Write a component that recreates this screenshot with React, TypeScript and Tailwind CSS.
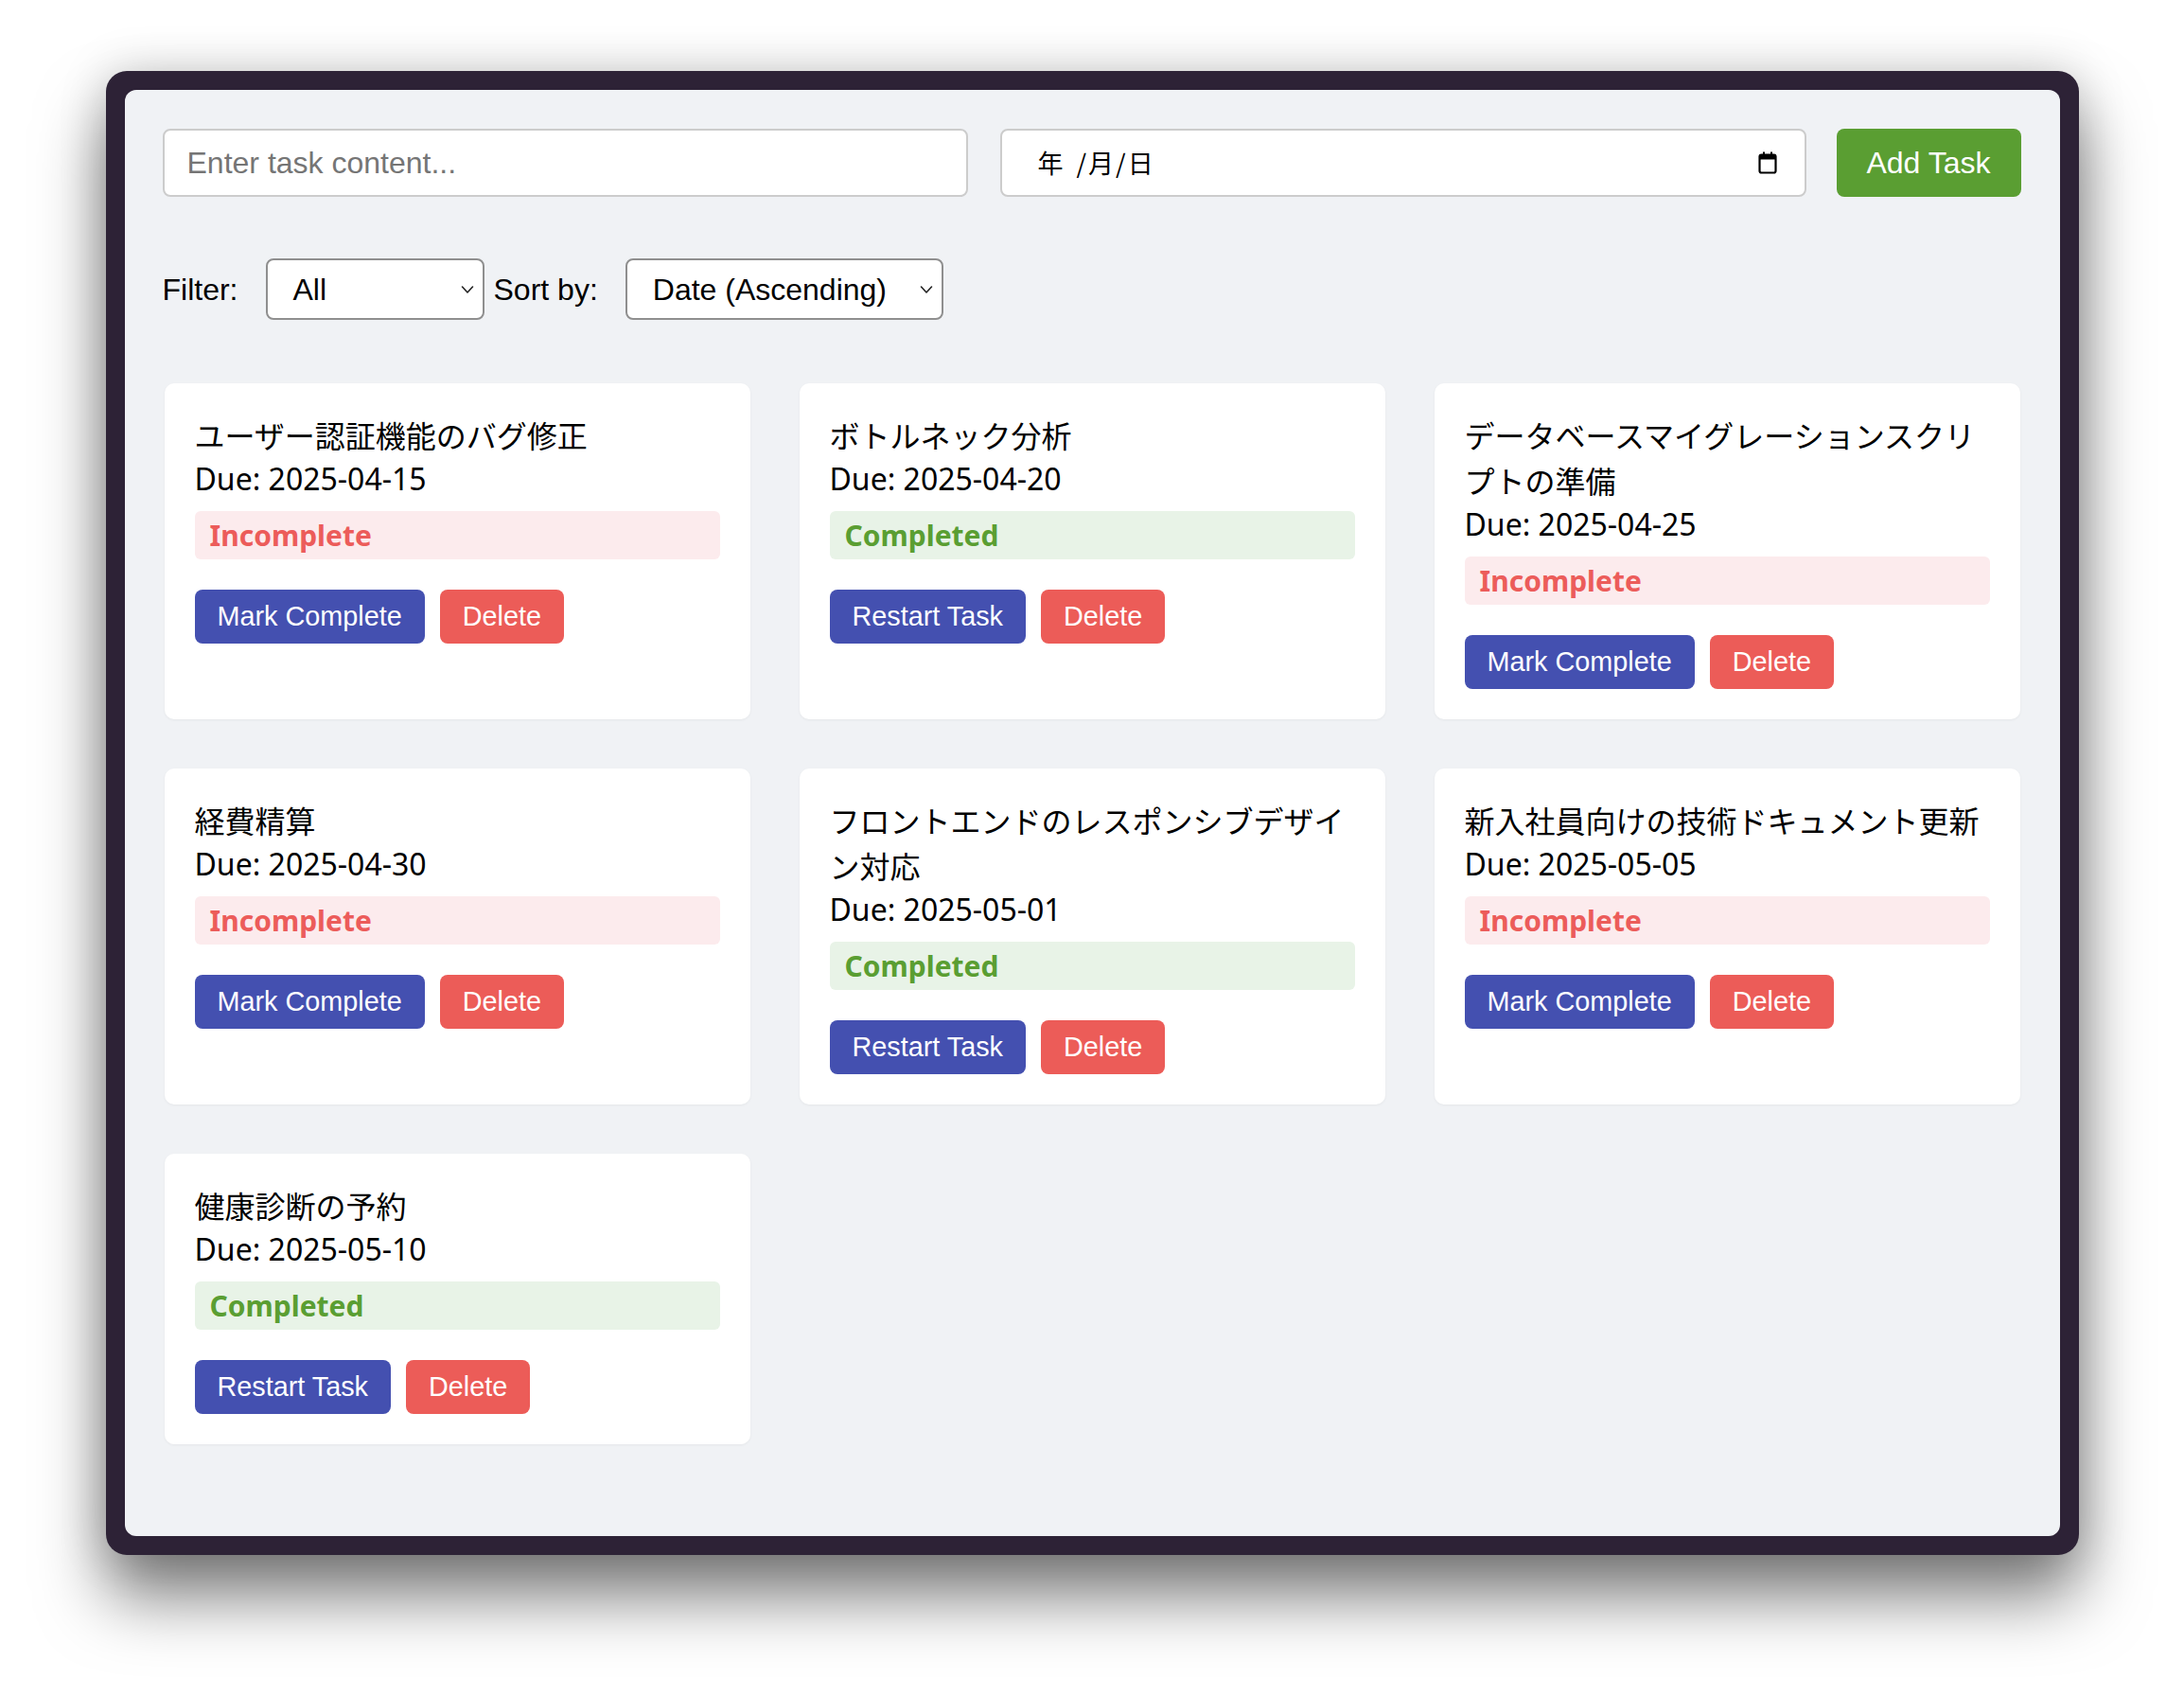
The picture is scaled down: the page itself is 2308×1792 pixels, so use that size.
import { useState } from 'react';

type Task = { id: number; text: string; due: string; done: boolean };

const initialTasks: Task[] = [
  { id: 1, text: 'ユーザー認証機能のバグ修正', due: '2025-04-15', done: false },
  { id: 2, text: 'ボトルネック分析', due: '2025-04-20', done: true },
  { id: 3, text: 'データベースマイグレーションスクリプトの準備', due: '2025-04-25', done: false },
  { id: 4, text: '経費精算', due: '2025-04-30', done: false },
  { id: 5, text: 'フロントエンドのレスポンシブデザイン対応', due: '2025-05-01', done: true },
  { id: 6, text: '新入社員向けの技術ドキュメント更新', due: '2025-05-05', done: false },
  { id: 7, text: '健康診断の予約', due: '2025-05-10', done: true },
];

const Chevron = () => (
  <svg width="14" height="10" viewBox="0 0 14 10" fill="none" className="shrink-0">
    <path d="M1.5 2l5.5 6 5.5-6" stroke="#222" strokeWidth="1.6" strokeLinecap="round" strokeLinejoin="round" />
  </svg>
);

const CalendarIcon = () => (
  <svg width="20" height="24" viewBox="0 0 20 24" fill="none">
    <rect x="1.5" y="3.5" width="17" height="19" rx="2" stroke="#000" strokeWidth="2.2" />
    <rect x="1.5" y="3.5" width="17" height="5" fill="#000" />
    <rect x="5" y="0.5" width="2" height="4" fill="#000" />
    <rect x="13" y="0.5" width="2" height="4" fill="#000" />
  </svg>
);

const SelectBox = ({ label, width }: { label: string; width: string }) => (
  <div
    className={`${width} h-[65px] flex items-center justify-between rounded-[8px] border-2 border-[#8f8f8f] bg-white pl-[27px] pr-[9px] text-[32px] text-black`}
  >
    <span>{label}</span>
    <Chevron />
  </div>
);

const TaskCard = ({ task }: { task: Task }) => (
  <div className="flex flex-col rounded-[10px] bg-white p-[32px] shadow-[0_1px_3px_rgba(0,0,0,0.05)] font-['Noto_Sans','Noto_Sans_CJK_JP',sans-serif]">
    <div className="text-[32px] leading-[48px] text-black">{task.text}</div>
    <div className="text-[32px] leading-[42px] text-black">Due: {task.due}</div>
    {task.done ? (
      <div className="mt-[13px] flex h-[51px] items-center rounded-[6px] bg-[#e8f3e7] px-[16px] text-[30px] font-bold text-[#5a9e32]">
        Completed
      </div>
    ) : (
      <div className="mt-[13px] flex h-[51px] items-center rounded-[6px] bg-[#fcebed] px-[16px] text-[30px] font-bold text-[#ec5c5a]">
        Incomplete
      </div>
    )}
    <div className="mt-[32px] flex gap-[16px] font-['Liberation_Sans',Arial,sans-serif]">
      <button className="h-[57px] rounded-[8px] bg-[#4450b0] px-[24px] text-[28.8px] text-white">
        {task.done ? 'Restart Task' : 'Mark Complete'}
      </button>
      <button className="h-[57px] rounded-[8px] bg-[#ec5c58] px-[24px] text-[28.8px] text-white">Delete</button>
    </div>
  </div>
);

export default function App() {
  const [tasks] = useState(initialTasks);

  return (
    <div className="min-h-screen bg-white pt-[75px] font-['Liberation_Sans',Arial,sans-serif]">
      <div className="mx-auto w-[2085px] rounded-[22px] bg-[#2d2236] p-[20px] shadow-[0_45px_70px_rgba(0,0,0,0.5),0_0_50px_rgba(0,0,0,0.18)]">
        <div className="h-[1528px] rounded-[12px] bg-[#f0f2f5] px-[40px] pt-[41px]">
          {/* add task row */}
          <div className="flex h-[72px]">
            <div className="flex w-[851px] items-center rounded-[8px] border-2 border-[#cccccc] bg-white pl-[24px] text-[32px] text-[#757575]">
              Enter task content...
            </div>
            <div className="ml-[34px] flex w-[852px] items-center justify-between rounded-[8px] border-2 border-[#cccccc] bg-white pl-[38px] pr-[29px] text-[27px] text-black font-['Noto_Sans_CJK_JP',sans-serif]">
              <div className="flex items-center">
                <span>年</span>
                <span className="ml-[14px]">/</span>
                <span className="ml-[2px]">月</span>
                <span className="ml-[2px]">/</span>
                <span className="ml-[2px]">日</span>
              </div>
              <CalendarIcon />
            </div>
            <button className="ml-[32px] w-[195px] rounded-[8px] bg-[#5a9e32] text-[32px] text-white">Add Task</button>
          </div>

          {/* filter / sort row */}
          <div className="mt-[65px] flex h-[65px] items-center text-[32px] text-black">
            <span>Filter:</span>
            <div className="ml-[29px]">
              <SelectBox label="All" width="w-[231px]" />
            </div>
            <span className="ml-[10px]">Sort by:</span>
            <div className="ml-[29px]">
              <SelectBox label="Date (Ascending)" width="w-[336px]" />
            </div>
          </div>

          {/* task cards */}
          <div className="mx-[2px] mt-[67px] grid grid-cols-3 gap-[52px]">
            {tasks.map((task) => (
              <TaskCard key={task.id} task={task} />
            ))}
          </div>
        </div>
      </div>
    </div>
  );
}
